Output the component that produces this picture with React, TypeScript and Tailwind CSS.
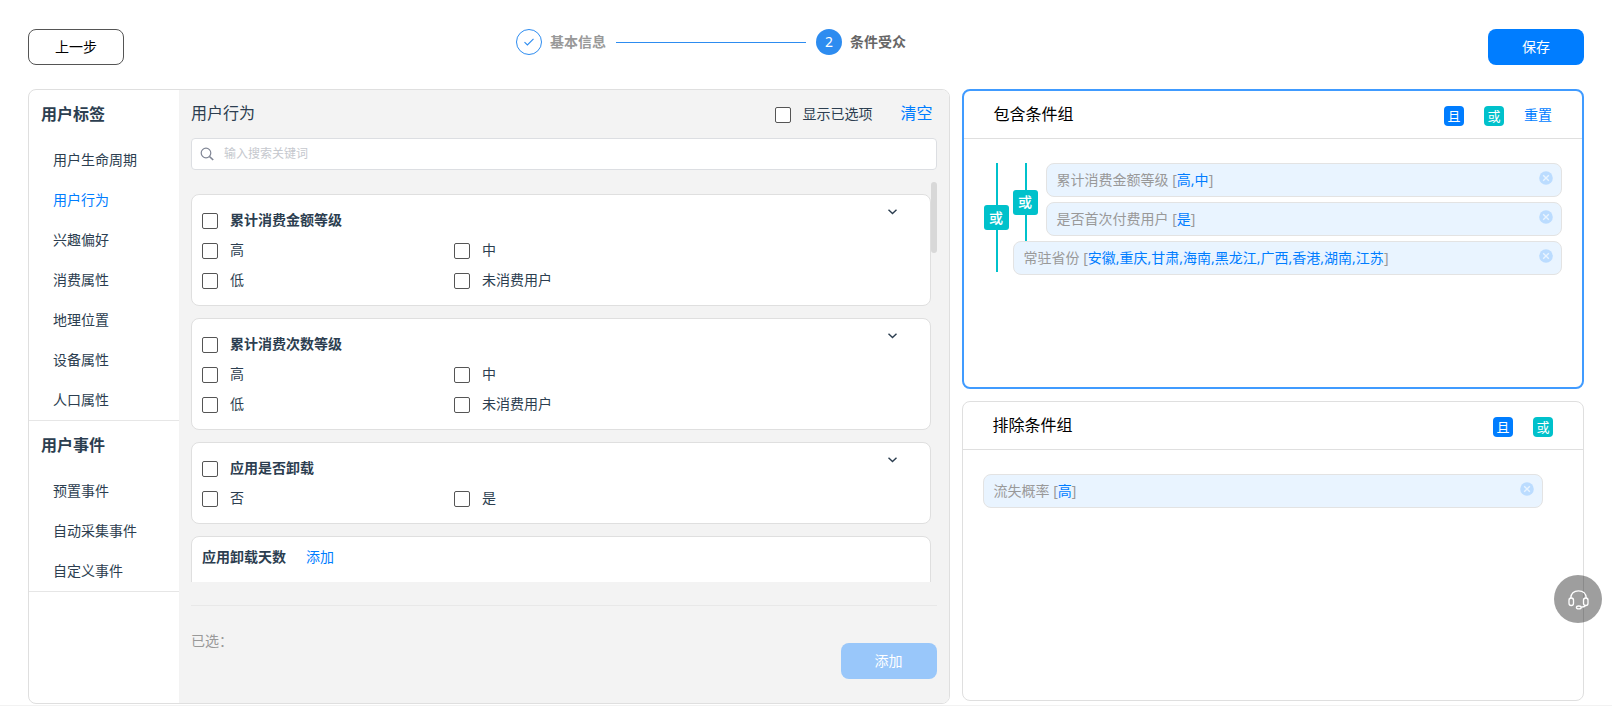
import { useState } from "react";

type Condition = { name: string; values: string[] };

const menu = [
  {
    title: "用户标签",
    items: ["用户生命周期", "用户行为", "兴趣偏好", "消费属性", "地理位置", "设备属性", "人口属性"],
  },
  {
    title: "用户事件",
    items: ["预置事件", "自动采集事件", "自定义事件"],
  },
];

const tagGroups = [
  { title: "累计消费金额等级", options: ["高", "中", "低", "未消费用户"] },
  { title: "累计消费次数等级", options: ["高", "中", "低", "未消费用户"] },
  { title: "应用是否卸载", options: ["否", "是"] },
];

const spending: Condition = { name: "累计消费金额等级", values: ["高", "中"] };
const firstPay: Condition = { name: "是否首次付费用户", values: ["是"] };
const province: Condition = {
  name: "常驻省份",
  values: ["安徽", "重庆", "甘肃", "海南", "黑龙江", "广西", "香港", "湖南", "江苏"],
};
const churn: Condition = { name: "流失概率", values: ["高"] };

function Checkbox({ label, bold }: { label: string; bold?: boolean }) {
  return (
    <label className="flex h-[30px] items-center gap-3">
      <input
        type="checkbox"
        className="mt-0.5 size-4 shrink-0 appearance-none rounded-xs border border-[#555] bg-white checked:bg-[#007dff]"
      />
      <span className={bold ? "font-bold" : ""}>{label}</span>
    </label>
  );
}

function TagCard({ title, options }: { title: string; options: string[] }) {
  return (
    <section className="rounded-lg border border-[#dfdfdf] bg-white p-[10px]">
      <div className="flex items-start justify-between">
        <Checkbox label={title} bold />
        <button type="button" aria-label="收起" className="mr-[23px] flex h-[14px] items-center">
          <svg width="9" height="6" viewBox="0 0 9 6" fill="none" stroke="#2c3e50" strokeWidth="1.4">
            <path d="M0.5 0.8 4.5 4.6 8.5 0.8" />
          </svg>
        </button>
      </div>
      <div className="grid grid-cols-[252px_1fr]">
        {options.map((option) => (
          <Checkbox key={option} label={option} />
        ))}
      </div>
    </section>
  );
}

function ConditionChip({ name, values }: Condition) {
  return (
    <div className="flex h-[34px] items-center justify-between rounded-lg border border-[#e3e3e3] bg-[#e9f4ff] pr-2 pl-[10px] text-[#999]">
      <span>
        {name} [<span className="text-[#007dff]">{values.join(",")}</span>]
      </span>
      <button type="button" aria-label="删除" className="mb-1">
        <svg width="14" height="14" viewBox="0 0 14 14">
          <circle cx="7" cy="7" r="6.8" fill="#bbdcff" />
          <path d="M4.2 4.2 9.8 9.8M9.8 4.2 4.2 9.8" stroke="#e9f4ff" strokeWidth="1.4" />
        </svg>
      </button>
    </div>
  );
}

function OrConnector() {
  return (
    <div className="relative flex w-[25px] shrink-0 items-center justify-center">
      <div className="absolute inset-y-0 left-3 w-[2px] bg-[#00c1cb]" />
      <button type="button" className="relative size-[25px] rounded-[3px] bg-[#00c1cb] font-medium text-white">
        或
      </button>
    </div>
  );
}

function GroupActions({ resettable }: { resettable?: boolean }) {
  return (
    <div className="flex items-center gap-5">
      <button type="button" className="mt-0.5 size-5 rounded-sm bg-[#007dff] text-[13px] leading-5 text-white">
        且
      </button>
      <button type="button" className="mt-0.5 size-5 rounded-sm bg-[#00c1cb] text-[13px] leading-5 text-white">
        或
      </button>
      {resettable && (
        <button type="button" className="text-[#007dff]">
          重置
        </button>
      )}
    </div>
  );
}

function Steps() {
  return (
    <ol className="flex w-[600px] font-bold">
      <li className="flex h-[26px] flex-1 items-center pl-[10px] text-[#999]">
        <span className="mr-2 flex size-[26px] items-center justify-center rounded-full border border-[#2d8cf0]">
          <svg width="10" height="8" viewBox="0 0 10 8" fill="none" stroke="#2d8cf0" strokeWidth="1.1">
            <path d="M0.5 4.2 3.4 7 9.5 0.8" />
          </svg>
        </span>
        基本信息
        <span className="ml-[10px] h-px flex-1 bg-[#2d8cf0]" />
      </li>
      <li className="flex h-[26px] flex-1 items-center pl-[10px] text-[#666]">
        <span className="mr-2 flex size-[26px] items-center justify-center rounded-full bg-[#2d8cf0] font-normal text-white">
          2
        </span>
        条件受众
      </li>
    </ol>
  );
}

export default function App() {
  const [active, setActive] = useState("用户行为");
  const [keyword, setKeyword] = useState("");

  return (
    <div className="border-b border-[#f2f2f2] bg-white px-7 pt-[29px] pb-px font-['Noto_Sans','Noto_Sans_CJK_SC',sans-serif] text-sm text-[#2c3e50]">
      <header className="flex items-start justify-between">
        <button type="button" className="h-9 w-24 rounded-lg border border-[#555] text-black">
          上一步
        </button>
        <Steps />
        <button type="button" className="h-9 w-24 rounded-lg bg-[#007dff] text-white">
          保存
        </button>
      </header>

      <main className="mt-6 flex items-start gap-3">
        <div className="flex min-w-0 flex-1 overflow-hidden rounded-lg border border-[#dfdfdf]">
          <nav className="w-[150px] shrink-0">
            {menu.map((group) => (
              <div key={group.title} className="border-b border-[#e6e6e6]">
                <h2 className="pb-0.5 pl-3 text-base leading-12 font-bold">{group.title}</h2>
                <ul>
                  {group.items.map((item) => (
                    <li key={item}>
                      <button
                        type="button"
                        onClick={() => setActive(item)}
                        className={`h-10 w-full pl-6 text-left ${item === active ? "text-[#007dff]" : ""}`}
                      >
                        {item}
                      </button>
                    </li>
                  ))}
                </ul>
              </div>
            ))}
          </nav>

          <section className="min-w-0 flex-1 bg-[#f3f3f3] px-3">
            <div className="flex h-12 items-center">
              <h1 className="flex-1 pb-0.5 text-base">{active}</h1>
              <Checkbox label="显示已选项" />
              <button type="button" className="mr-1 ml-7 pb-0.5 text-base text-[#007dff]">
                清空
              </button>
            </div>
            <label className="flex h-8 items-center gap-[10px] rounded-sm border border-[#dcdee2] bg-white px-2">
              <svg width="14" height="14" viewBox="0 0 14 14" fill="none" stroke="#808695" strokeWidth="1.2">
                <circle cx="6" cy="6" r="4.8" />
                <path d="M9.5 9.5 13.2 13" strokeWidth="1.7" />
              </svg>
              <input
                type="text"
                aria-label="搜索"
                placeholder="输入搜索关键词"
                value={keyword}
                onChange={(e) => setKeyword(e.target.value)}
                className="flex-1 text-xs outline-none placeholder:text-[#c5c8ce]"
              />
            </label>

            <div className="mt-3 flex h-[400px] overflow-hidden">
              <div className="flex-1 space-y-3 pt-3">
                {tagGroups.map((group) => (
                  <TagCard key={group.title} {...group} />
                ))}
                <section className="flex h-20 items-start gap-5 rounded-lg border border-[#dfdfdf] bg-white p-[10px]">
                  <span className="font-bold">应用卸载天数</span>
                  <button type="button" className="text-[#007dff]">
                    添加
                  </button>
                </section>
              </div>
              <div className="h-[71px] w-[6px] rounded-full bg-[#d8d8d8]" />
            </div>

            <div className="mt-[23px] flex justify-between border-t border-[#e8e8e8] pb-6">
              <p className="mt-[25px] text-[#999]">已选：</p>
              <button type="button" className="mt-[37px] h-9 w-24 rounded-lg bg-[#99c7fa] text-white">
                添加
              </button>
            </div>
          </section>
        </div>

        <div className="w-2/5 space-y-3">
          <section className="h-[300px] rounded-lg border-2 border-[#409bff]">
            <div className="flex h-12 items-center justify-between border-b border-[#dfdfdf] px-[30px]">
              <h2 className="pb-0.5 text-base text-black">包含条件组</h2>
              <GroupActions resettable />
            </div>
            <div className="flex gap-1 px-5 pt-6">
              <div className="flex pb-[3px]">
                <OrConnector />
              </div>
              <div className="flex-1">
                <div className="flex gap-2">
                  <OrConnector />
                  <div className="flex-1 space-y-[5px] pb-[5px]">
                    <ConditionChip {...spending} />
                    <ConditionChip {...firstPay} />
                  </div>
                </div>
                <ConditionChip {...province} />
              </div>
            </div>
          </section>

          <section className="h-[300px] rounded-lg border border-[#dfdfdf]">
            <div className="flex h-12 items-center justify-between border-b border-[#dfdfdf] px-[30px]">
              <h2 className="pb-0.5 text-base text-black">排除条件组</h2>
              <GroupActions />
            </div>
            <div className="pt-6 pr-10 pl-5">
              <ConditionChip {...churn} />
            </div>
          </section>
        </div>
      </main>

      <button
        type="button"
        aria-label="客服"
        className="fixed right-[10px] bottom-[83px] flex size-12 items-center justify-center rounded-full bg-black/38"
      >
        <svg width="24" height="24" viewBox="0 0 24 24" fill="none" stroke="white" strokeWidth="1.3">
          <path d="M4.700 11.300C4.700 6.500 8 3.800 12.500 3.800s7.800 2.700 7.800 7.500" />
          <rect x="3" y="11" width="4.500" height="7.500" rx="2.200" />
          <rect x="17.500" y="11" width="4.500" height="7.500" rx="2.200" />
          <path d="M19.500 18.500c-.8 1-2.200 1.600-4.300 1.700" />
          <ellipse cx="12.800" cy="20.400" rx="2.400" ry="1.400" />
        </svg>
      </button>
    </div>
  );
}
